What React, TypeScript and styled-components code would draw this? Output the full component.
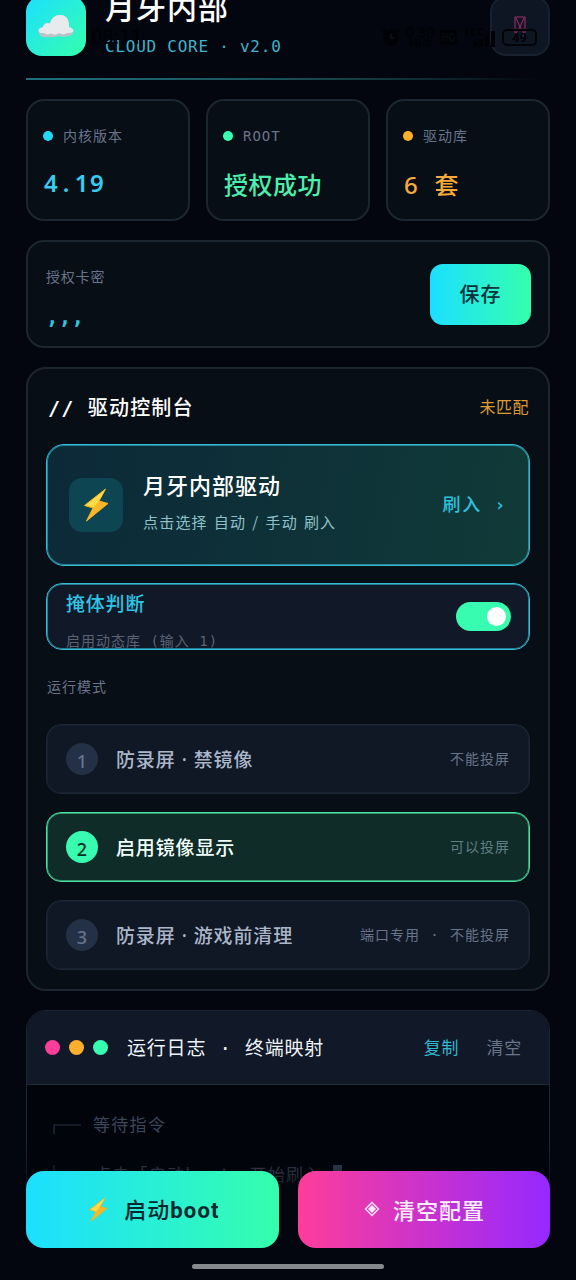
import React from 'react';
import styled, { createGlobalStyle, css } from 'styled-components';

const sans = '"Noto Sans CJK SC", "Noto Sans", sans-serif';
const mono = '"DejaVu Sans Mono", "Noto Sans CJK SC", monospace';
const mixed = '"Noto Sans", "Noto Sans CJK SC", sans-serif';

const color = {
  page: '#03060e',
  panel: '#080e16',
  raised: '#111827',
  line: '#1c2631',
  cyan: '#22d9fb',
  green: '#38fcb0',
  amber: '#fbb02d',
  pink: '#ff3d9a',
  muted: '#68748a',
};

const GlobalStyle = createGlobalStyle`
  * { box-sizing: border-box; }
  body { margin: 0; background: ${color.page}; }
  button { border: 0; padding: 0; margin: 0; background: none; }
`;

interface TextProps {
  $size: number;
  $color?: string;
  $weight?: number;
  $gap?: number;
  $line?: number;
  $mono?: boolean;
  $mixed?: boolean;
  $word?: number;
}

const Text = styled.span<TextProps>`
  display: block;
  white-space: pre;
  font-family: ${p => (p.$mono ? mono : p.$mixed ? mixed : sans)};
  font-size: ${p => p.$size}px;
  font-weight: ${p => p.$weight ?? 400};
  line-height: ${p => p.$line ?? 24}px;
  letter-spacing: ${p => p.$gap ?? 1}px;
  word-spacing: ${p => p.$word ?? 0}px;
  color: ${p => p.$color ?? '#fff'};
`;

const Strong = styled.span`
  font-weight: 700;
`;

const Point = styled.span`
  margin: 0 4px 0 3.5px;
`;

const Screen = styled.main`
  position: relative;
  width: 576px;
  height: 1280px;
  padding: 0 26px;
  overflow: hidden;
  background: ${color.page};
`;

const Header = styled.header`
  display: flex;
  align-items: flex-start;
  height: 84px;
  margin-top: -4px;
  border-bottom: 2px solid;
  border-image: linear-gradient(90deg, #1f6f7a 0%, #1a555c 45%, #102c34 75%, transparent 98%) 1;
`;

const Logo = styled.div`
  display: grid;
  place-items: center;
  width: 60px;
  height: 60px;
  border-radius: 16px;
  background: linear-gradient(135deg, #1cdfff, #35ffad);
`;

const Brand = styled.div`
  flex: 1;
  padding-left: 19px;
  margin-top: -9px;
`;

const CloseBox = styled.div`
  display: grid;
  place-items: center;
  width: 60px;
  height: 60px;
  padding-top: 2px;
  border: 2px solid #17212f;
  border-radius: 16px;
  background: #0e1624;
`;

const StatusBar = styled.div`
  position: absolute;
  top: 24px;
  left: 91px;
  right: 39px;
  display: flex;
  align-items: center;
  justify-content: space-between;
  height: 26px;
  color: #010206;
  font: 500 20px/26px Roboto, sans-serif;
`;

const StatusIcons = styled.div`
  display: flex;
  align-items: center;
  gap: 6px;
`;

const NetSpeed = styled.div`
  width: 28px;
  text-align: center;
  font: 600 14px/12px Roboto, sans-serif;
  small { display: block; font-size: 10px; line-height: 9px; }
`;

const HdBadge = styled.div`
  width: 17px;
  height: 15px;
  border-radius: 3px;
  background: #010206;
  color: #070b12;
  font: 700 10px/15px Roboto, sans-serif;
  text-align: center;
`;

const Battery = styled.div`
  width: 35px;
  height: 17px;
  border: 2px solid #02040a;
  border-radius: 5px;
  font: 700 13px/13px Roboto, sans-serif;
  text-align: center;
`;

const Stats = styled.section`
  display: grid;
  grid-template-columns: repeat(3, 164px);
  gap: 16px;
  margin-top: 19px;
`;

const panel = css`
  border: 2px solid ${color.line};
  border-radius: 18px;
  background: ${color.panel};
`;

const glowEdge = css<{ $edge?: string }>`
  border: 1px solid ${p => p.$edge ?? '#36bcd2'};
  box-shadow: inset 0 0 0 1px ${p => p.$edge ?? '#36bcd2'}99;
`;

const StatCard = styled.div`
  ${panel}
  height: 122px;
  padding: 23px 0 0 15px;
`;

const StatLabel = styled.div`
  display: flex;
  align-items: center;
  gap: 10px;
`;

const Dot = styled.i<{ $color: string; $size: number }>`
  width: ${p => p.$size}px;
  height: ${p => p.$size}px;
  border-radius: 50%;
  background: ${p => p.$color};
`;

const StatValue = styled.div`
  margin-top: 20px;
  padding-left: 1px;
`;

const KeyCard = styled.section`
  ${panel}
  display: flex;
  justify-content: space-between;
  align-items: center;
  height: 108px;
  margin-top: 19px;
  padding: 0 17px 0 18px;
`;

const KeyField = styled.div`
  align-self: flex-start;
  padding-top: 22px;
`;

const SaveButton = styled.button`
  display: grid;
  place-items: center;
  width: 101px;
  height: 61px;
  border-radius: 13px;
  background: linear-gradient(90deg, #1cdfff, #35ffad);
`;

const Console = styled.section`
  ${panel}
  height: 624px;
  margin-top: 19px;
  padding: 0 18px;
  border-radius: 20px;
`;

const ConsoleHead = styled.div`
  display: flex;
  justify-content: space-between;
  align-items: flex-start;
  height: 75px;
  padding: 26px 1px 0 2px;
`;

const DriverCard = styled.div`
  ${glowEdge}
  display: flex;
  align-items: center;
  height: 122px;
  padding: 0 22px;
  border-radius: 18px;
  background: linear-gradient(100deg, #0c2938, #103a38);
`;

const BoltBox = styled.div`
  display: grid;
  place-items: center;
  width: 54px;
  height: 54px;
  border-radius: 13px;
  background: #0d4552;
`;

const DriverText = styled.div`
  flex: 1;
  padding-left: 20px;
  margin-top: -2px;
`;

const ToggleCard = styled.div`
  ${glowEdge}
  display: flex;
  justify-content: space-between;
  align-items: center;
  height: 67px;
  margin-top: 17px;
  padding: 0 18px 0 19px;
  overflow: hidden;
  border-radius: 16px;
  background: ${color.raised};
`;

const ToggleText = styled.div`
  align-self: flex-start;
  margin-top: 7px;
`;

const Switch = styled.div`
  display: flex;
  justify-content: flex-end;
  width: 55px;
  height: 29px;
  padding: 5px;
  border-radius: 15px;
  background: ${color.green};
`;

const Knob = styled.i`
  width: 19px;
  height: 19px;
  border-radius: 50%;
  background: #fff;
`;

const ModeLabel = styled.div`
  height: 74px;
  padding: 24px 0 0 1px;
`;

const Modes = styled.div`
  display: flex;
  flex-direction: column;
  gap: 18px;
`;

const Mode = styled.div<{ $active: boolean; $edge: string }>`
  ${glowEdge}
  display: flex;
  align-items: center;
  height: 70px;
  padding: 0 19px;
  border-radius: 15px;
  background: ${p => (p.$active ? '#102c28' : '#101826')};
`;

const ModeNumber = styled.div<{ $active?: boolean }>`
  width: 32px;
  height: 32px;
  margin-right: 18px;
  border-radius: 50%;
  background: ${p => (p.$active ? color.green : '#243046')};
  color: ${p => (p.$active ? '#07301f' : '#66748d')};
  font: 500 18px/36px "Noto Sans", sans-serif;
  text-align: center;
`;

const ModeName = styled.div`
  flex: 1;
  padding-top: 2px;
`;

const Log = styled.section`
  height: 300px;
  margin-top: 19px;
  overflow: hidden;
  border: 1.5px solid #1b2635;
  border-radius: 20px;
  background: #02040b;
`;

const LogHead = styled.div`
  display: flex;
  align-items: center;
  height: 74px;
  padding: 0 27px 0 18px;
  border-bottom: 1.5px solid #1e2e3e;
  background: ${color.raised};
`;

const Dots = styled.div`
  display: flex;
  gap: 9px;
  margin-right: 19px;
`;

const LogActions = styled.div`
  display: flex;
  gap: 27px;
  margin-left: auto;
  padding-bottom: 1px;
`;

const LogBody = styled.div`
  padding: 15px 0 0 22px;
`;

const LogLine = styled.div<{ $indent?: number }>`
  display: flex;
  align-items: center;
  gap: ${p => p.$indent ?? 12}px;
  height: 50px;
`;

const Branch = styled.svg`
  width: 32px;
  height: 50px;
  fill: none;
  stroke: #283244;
  stroke-width: 1.2;
`;

const Caret = styled.i`
  width: 9px;
  height: 20px;
  margin-left: -2px;
  background: #3b465a;
`;

const Footer = styled.footer`
  position: absolute;
  left: 0;
  right: 0;
  bottom: 0;
  display: flex;
  flex-direction: column;
  align-items: center;
  height: 134px;
  padding-top: 25px;
  background: linear-gradient(180deg, rgba(3, 6, 14, 0), ${color.page} 52%);
`;

const Actions = styled.div`
  display: grid;
  grid-template-columns: 253px 252px;
  gap: 19px;
  width: 524px;
`;

const ActionButton = styled.button<{ $danger?: boolean }>`
  display: flex;
  align-items: center;
  justify-content: center;
  gap: ${p => (p.$danger ? 13 : 16)}px;
  height: 77px;
  padding: ${p => (p.$danger ? '0 0 2px 1px' : '0 0 0 3px')};
  border-radius: 18px;
  background: ${p =>
    p.$danger
      ? 'linear-gradient(90deg, #ff3d9a, #9628ff)'
      : 'linear-gradient(90deg, #1cdfff, #35ffad)'};
`;

const BootWord = styled.span`
  font-family: Roboto, sans-serif;
  font-weight: 700;
  letter-spacing: 1.2px;
`;

const HomeBar = styled.i`
  width: 192px;
  height: 5px;
  margin-top: 16px;
  border-radius: 3px;
  background: #86888b;
`;

const Cloud = () => (
  <svg width="36" height="24" viewBox="0 0 36 24">
    <path d="M6 23Q1 22.500 .5 18Q.5 14.500 5 13Q6 9 10 9Q11 9 12 9.500Q14 1 22 1Q30 1 31 10V13Q35.500 14.500 35.500 18Q35 22 29 22Q26 24 22 22Q14 24 6 23Z" fill="#b9c4c8" />
    <path d="M6 19Q1 19.500 .5 16.500Q1 13.500 5 13Q6 9 10 9Q11 9 12 9.500Q14 1 22 1Q30 1 31 10V13Q35 14 35.500 17Q34 19.500 29 19Q25 21.500 21 19Q17 22 13 19.500Q9 21.500 6 19Z" fill="#e8ebee" />
  </svg>
);

const Bolt = ({ width, height }: { width: number; height: number }) => (
  <svg width={width} height={height} viewBox="0 0 26 34">
    <path d="M22.500 1L1.500 17.500L10 20L3.500 33L25 15.500L16 13Z" fill="#fbc02d" stroke="#f6b51f" strokeLinejoin="round" />
    <path d="M22 2L3 17L11 19.500L15 14Z" fill="#ffdb49" />
    <path d="M4 32L11 19.500L16 13L24 15.500Z" fill="#f9ae22" opacity=".55" />
  </svg>
);

const MissingGlyph = () => (
  <svg width="12" height="22" viewBox="0 0 12 22" fill="none" stroke="#a52d6d">
    <path d="M1 1H11V17M1 1V17M2 2L6 11L10 2M6 11L2 17M6 11L10 17M2 19H4M8 19H10" />
  </svg>
);

const Alarm = () => (
  <svg width="18" height="18" viewBox="0 0 18 18" fill="none" stroke="#010206" strokeWidth="2">
    <circle cx="9" cy="10" r="7" fill="#010206" />
    <path d="M1 4L4 1M14 1L17 4" />
    <path d="M9 6V10H12" stroke="#0a0f17" />
  </svg>
);

const Signal = () => (
  <svg width="33" height="20" viewBox="0 0 33 20" fill="#010206">
    <path d="M1 2H5V9H3V4H1ZM8 1H13V3H10V7H13V9H8ZM15 1H20V3H17V7H20V9H15ZM10 15H14V20H10ZM16 12H20V20H16ZM22 8H26V20H22ZM28 4H32V20H28Z" />
  </svg>
);

const Diamond = () => (
  <svg width="16" height="16" viewBox="0 0 16 16" fill="none" stroke="#ffe9fb" strokeWidth="1.400">
    <path d="M8 1.500L14.500 8L8 14.500L1.500 8Z" />
    <path d="M8 5L11 8L8 11L5 8Z" fill="#ffe9fb" />
  </svg>
);

const modes = [
  { name: '防录屏 · 禁镜像', hint: '不能投屏', active: false },
  { name: '启用镜像显示', hint: '可以投屏', active: true },
  { name: '防录屏 · 游戏前清理', hint: '端口专用 · 不能投屏', active: false },
];

export default function App() {
  return (
    <>
      <GlobalStyle />
      <Screen>
        <Header>
          <Logo><Cloud /></Logo>
          <Brand>
            <Text $size={30} $weight={500} $line={39}>月牙内部</Text>
            <Text $mono $size={16} $gap={0.75} $line={42} $color="#3fb4cc">CLOUD CORE · v2.0</Text>
          </Brand>
          <CloseBox><MissingGlyph /></CloseBox>
        </Header>

        <Stats>
          <StatCard>
            <StatLabel>
              <Dot $size={10} $color={color.cyan} />
              <Text $mono $size={14} $color={color.muted}>内核版本</Text>
            </StatLabel>
            <StatValue>
              <Text $mixed $size={24} $weight={600} $gap={1.5} $line={30} $color="#35cdf0">4<Point>.</Point>19</Text>
            </StatValue>
          </StatCard>
          <StatCard>
            <StatLabel>
              <Dot $size={10} $color={color.green} />
              <Text $mono $size={14} $color={color.muted}>ROOT</Text>
            </StatLabel>
            <StatValue>
              <Text $size={24} $weight={500} $gap={0.5} $line={32} $color="#4af0ae">授权成功</Text>
            </StatValue>
          </StatCard>
          <StatCard>
            <StatLabel>
              <Dot $size={10} $color={color.amber} />
              <Text $mono $size={14} $color={color.muted}>驱动库</Text>
            </StatLabel>
            <StatValue>
              <Text $mixed $size={24} $weight={500} $gap={0.5} $word={9.5} $line={33} $color="#f5ab3b">6 套</Text>
            </StatValue>
          </StatCard>
        </Stats>

        <KeyCard>
          <KeyField>
            <Text $size={14} $gap={0.8} $color={color.muted}>授权卡密</Text>
            <Text $mono $size={21} $weight={700} $gap={0.1} $line={58} $color="#2fc5df">,,,</Text>
          </KeyField>
          <SaveButton>
            <Text $size={20} $weight={500} $line={26} $color="#06323a">保存</Text>
          </SaveButton>
        </KeyCard>

        <Console>
          <ConsoleHead>
            <Text $mono $size={20} $weight={500} $gap={1.2} $line={27}><Strong>//</Strong> 驱动控制台</Text>
            <Text $size={16} $gap={0.5} $line={22} $color="#dc9a38">未匹配</Text>
          </ConsoleHead>
          <DriverCard>
            <BoltBox><Bolt width={26} height={34} /></BoltBox>
            <DriverText>
              <Text $size={22} $weight={500} $line={36}>月牙内部驱动</Text>
              <Text $size={15} $gap={1.2} $word={1.5} $line={40} $color="#8fc1ca">点击选择 自动 / 手动 刷入</Text>
            </DriverText>
            <Text $mono $size={18} $weight={500} $gap={1.7} $line={26} $color="#2fc0dc">刷入 <Strong>›</Strong></Text>
          </DriverCard>
          <ToggleCard>
            <ToggleText>
              <Text $size={19} $weight={500} $gap={0.8} $color="#2fc5e4">掩体判断</Text>
              <Text $mono $size={14} $line={53} $color="#596375">启用动态库 (输入 1)</Text>
            </ToggleText>
            <Switch><Knob /></Switch>
          </ToggleCard>
          <ModeLabel>
            <Text $size={14} $color={color.muted}>运行模式</Text>
          </ModeLabel>
          <Modes>
            {modes.map((mode, index) => (
              <Mode key={mode.name} $active={mode.active} $edge={mode.active ? '#4be0a0' : '#1c2635'}>
                <ModeNumber $active={mode.active}>{index + 1}</ModeNumber>
                <ModeName>
                  <Text $mixed $size={19} $weight={500} $gap={0.85} $word={0.3} $line={26} $color={mode.active ? '#f1fffa' : '#aab6c8'}>
                    {mode.name}
                  </Text>
                </ModeName>
                <Text $mono $size={14} $word={0.8} $color={mode.active ? '#5f7d85' : color.muted}>{mode.hint}</Text>
              </Mode>
            ))}
          </Modes>
        </Console>

        <Log>
          <LogHead>
            <Dots>
              <Dot $size={15} $color={color.pink} />
              <Dot $size={15} $color={color.amber} />
              <Dot $size={15} $color={color.green} />
            </Dots>
            <Text $mono $size={19} $gap={0.8} $word={1} $line={26} $color="#eef3f8">运行日志 · 终端映射</Text>
            <LogActions>
              <Text $size={17} $gap={0.8} $color="#2fb9d2">复制</Text>
              <Text $size={17} $gap={0.8} $color={color.muted}>清空</Text>
            </LogActions>
          </LogHead>
          <LogBody>
            <LogLine>
              <Branch viewBox="0 0 32 50"><path d="M5 34V25H32" /></Branch>
              <Text $mono $size={17} $gap={1.3} $color="#3a465a">等待指令</Text>
            </LogLine>
            <LogLine $indent={13}>
              <Branch viewBox="0 0 32 50"><path d="M5 15V25H32" /></Branch>
              <Text $mono $size={17} $gap={1.25} $color="#3a465a">点击「启动boot」开始刷入</Text>
              <Caret />
            </LogLine>
          </LogBody>
        </Log>

        <Footer>
          <Actions>
            <ActionButton>
              <Bolt width={20} height={25} />
              <Text $size={22} $weight={500} $gap={1} $line={30} $color="#07282f">
                启动<BootWord>boot</BootWord>
              </Text>
            </ActionButton>
            <ActionButton $danger>
              <Diamond />
              <Text $size={22} $weight={500} $gap={1} $line={30} $color="#ffeefe">清空配置</Text>
            </ActionButton>
          </Actions>
          <HomeBar />
        </Footer>

        <StatusBar>
          <span>08:11</span>
          <StatusIcons>
            <Alarm />
            <NetSpeed>0.30<small>KB/S</small></NetSpeed>
            <HdBadge>HD</HdBadge>
            <Signal />
            <Battery>49</Battery>
          </StatusIcons>
        </StatusBar>
      </Screen>
    </>
  );
}
